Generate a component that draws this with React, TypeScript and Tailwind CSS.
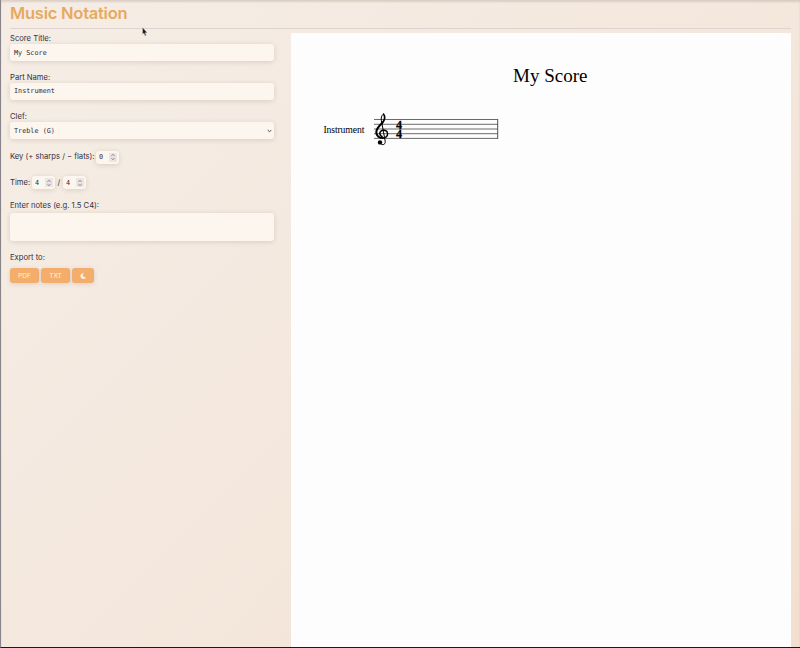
import React from "react";

const field =
  "w-full rounded-[3px] bg-[#fcf6ef] font-['DejaVu_Sans_Mono',monospace] text-[6.8px] text-[#2f2c3a] shadow-[0_1px_5px_rgba(120,80,70,0.2)]";
const labelText = "block whitespace-nowrap text-[7.65px] leading-[10px]";

function Spinner({ value }: { value: string }) {
  return (
    <div className="flex h-[13px] w-[23px] items-center justify-between rounded-[3px] bg-[#fcf6ef] pl-[3px] pr-[2px] font-['DejaVu_Sans_Mono',monospace] text-[6.8px] leading-[10px] text-[#2f2c3a] shadow-[0_1px_5px_rgba(120,80,70,0.2)]">
      <span>{value}</span>
      <span className="flex h-[9px] w-[8px] items-center justify-center rounded-[1px] bg-[#eae4e3]">
        <svg width="6" height="8" viewBox="0 0 6 8" fill="none" stroke="#77717a" strokeWidth="0.8">
          <path d="M1.3 2.8 3 1.4 4.7 2.8M1.3 5.2 3 6.6 4.7 5.2" />
        </svg>
      </span>
    </div>
  );
}

function Staff() {
  return (
    <svg width="182" height="38" viewBox="319 110 182 38">
      <text x="323.4" y="132.7" fontSize="9.7" textLength="41" fontFamily="Liberation Serif, serif">
        Instrument
      </text>
      <g stroke="#505050" strokeWidth="0.85">
        <path d="M374 119.5H498M374 124.3H498M374 129H498M374 133.7H498M374 138.4H498" />
        <path d="M497.7 119.1V138.8" strokeWidth="1" />
      </g>
      <g fill="none" stroke="#000" strokeLinecap="round">
        <path d="M380.1 142.8C381.1 145.8 385.7 145.3 385.2 141.2L381.3 120.2C380.9 117.2 382.1 114.2 383.6 114.2" strokeWidth="1" />
        <path d="M383.6 114.2C385.4 116.5 385 120.2 382.3 122.8" strokeWidth="1.7" />
        <path d="M382.5 122.6C379.5 125.6 376.2 128.3 376.3 132.2C376.4 135.8 379.2 138 382.6 138" strokeWidth="2.1" />
        <path d="M382.6 138.1C386 138 387.7 136 387.6 133.8C387.4 131.5 385.6 130.3 383.8 130.3" strokeWidth="1.4" />
        <path d="M383.9 130.3C381.3 130.1 379.6 131.9 379.8 133.7C379.9 135.2 380.9 136.1 382 136.4" strokeWidth="1.6" />
      </g>
      <circle cx="380" cy="142.4" r="2.2" />
      <g fontFamily="Liberation Serif, serif" fontWeight="bold" fontSize="13.2" textAnchor="middle" stroke="#000" strokeWidth="0.25">
        <text transform="translate(399.1 128.8) scale(0.92 1)">4</text>
        <text transform="translate(399.1 138.3) scale(0.92 1)">4</text>
      </g>
    </svg>
  );
}

export default function App() {
  return (
    <div className="relative flex h-[648px] w-[800px] flex-col overflow-hidden border-b border-l border-b-[#1d1720] border-l-[#89838a] bg-linear-135 from-[#f5ede5] via-[#f4e8de] to-[#f2dfcf] pl-[9px] pr-[9px] font-['Inter','Open_Sans',sans-serif] text-[#35313f] shadow-[inset_0_2px_2px_rgba(120,95,80,0.2)]">
      <header className="h-[29px] shrink-0 border-b border-[#ded4cf] pt-[3px]">
        <h1 className="whitespace-nowrap text-[16.5px] font-semibold leading-[20px] tracking-[-0.24px] text-[#e7a961]">Music Notation</h1>
      </header>
      <div className="flex min-h-0 flex-1">
        <section className="w-[264px] shrink-0 pt-[5px]">
          <label className={labelText}>Score Title:</label>
          <div className={`${field} flex h-[17px] items-center pl-[4px] pt-px`}>My Score</div>
          <label className={`${labelText} mt-[12px]`}>Part Name:</label>
          <div className={`${field} flex h-[17px] items-center pl-[4px]`}>Instrument</div>
          <label className={`${labelText} mt-[12px]`}>Clef:</label>
          <div className={`${field} flex h-[17px] items-center justify-between pl-[4px] pr-[2px] pt-px`}>
            <span>Treble (G)</span>
            <svg width="5" height="4" viewBox="0 0 5 4" fill="none" stroke="#38333d" strokeWidth="0.9">
              <path d="M.7 1 2.5 2.8 4.3 1" />
            </svg>
          </div>
          <div className="mt-[11px] flex h-[14px] items-center gap-[2px]">
            <span className="w-[84px] whitespace-nowrap text-[7.65px] tracking-[-0.01px]">Key (+ sharps / − flats):</span>
            <Spinner value="0" />
          </div>
          <div className="mt-[12px] flex h-[13px] items-center text-[7.65px]">
            <span className="w-[22px]">Time:</span>
            <Spinner value="4" />
            <span className="w-[8px] text-center">/</span>
            <Spinner value="4" />
          </div>
          <label className={`${labelText} mt-[12px]`}>Enter notes (e.g. 1.5 C4):</label>
          <div className={`${field} mt-[2px] h-[28px]`} />
          <span className={`${labelText} mt-[12px]`}>Export to:</span>
          <div className="mt-[5px] flex gap-[2px] font-['Inter',sans-serif] text-[6.6px] text-[#fff0da]">
            <button className="h-[15px] w-[29px] rounded-[3px] bg-[#f3ae6b] pt-px leading-[12px] shadow-[0_1px_4px_rgba(120,80,70,0.18)]">PDF</button>
            <button className="h-[15px] w-[29px] rounded-[3px] bg-[#f3ae6b] pt-px leading-[12px] shadow-[0_1px_4px_rgba(120,80,70,0.18)]">TXT</button>
            <button className="flex h-[15px] w-[22px] items-center justify-center rounded-[3px] bg-[#f3ae6b] shadow-[0_1px_4px_rgba(120,80,70,0.18)]">
              <svg width="6" height="6" viewBox="0 0 6 6" fill="#fff9ed">
                <path d="M3.4.2A2.8 2.8 0 1 0 5.8 4.6 2.6 2.6 0 0 1 3.4.2" stroke="#fff9ed" strokeWidth="0.4" />
              </svg>
            </button>
          </div>
        </section>
        <main className="ml-[17px] mt-[4px] flex-1 bg-[#fdfdfd] pl-[28px] pt-[32px] font-['Liberation_Serif',serif] text-black">
          <h2 className="ml-[194px] whitespace-nowrap text-[19px] leading-[22px]">My Score</h2>
          <div className="mt-[23px]">
            <Staff />
          </div>
        </main>
      </div>
      <svg className="absolute left-[141px] top-[27px]" width="6" height="10" viewBox="0 0 6 10">
        <path d="M.6.6V7.3L2 6.1 3 8.7 4.2 8.2 3.1 5.7H5.1Z" fill="#17141c" stroke="#d8d1cf" strokeWidth="0.4" />
      </svg>
    </div>
  );
}
